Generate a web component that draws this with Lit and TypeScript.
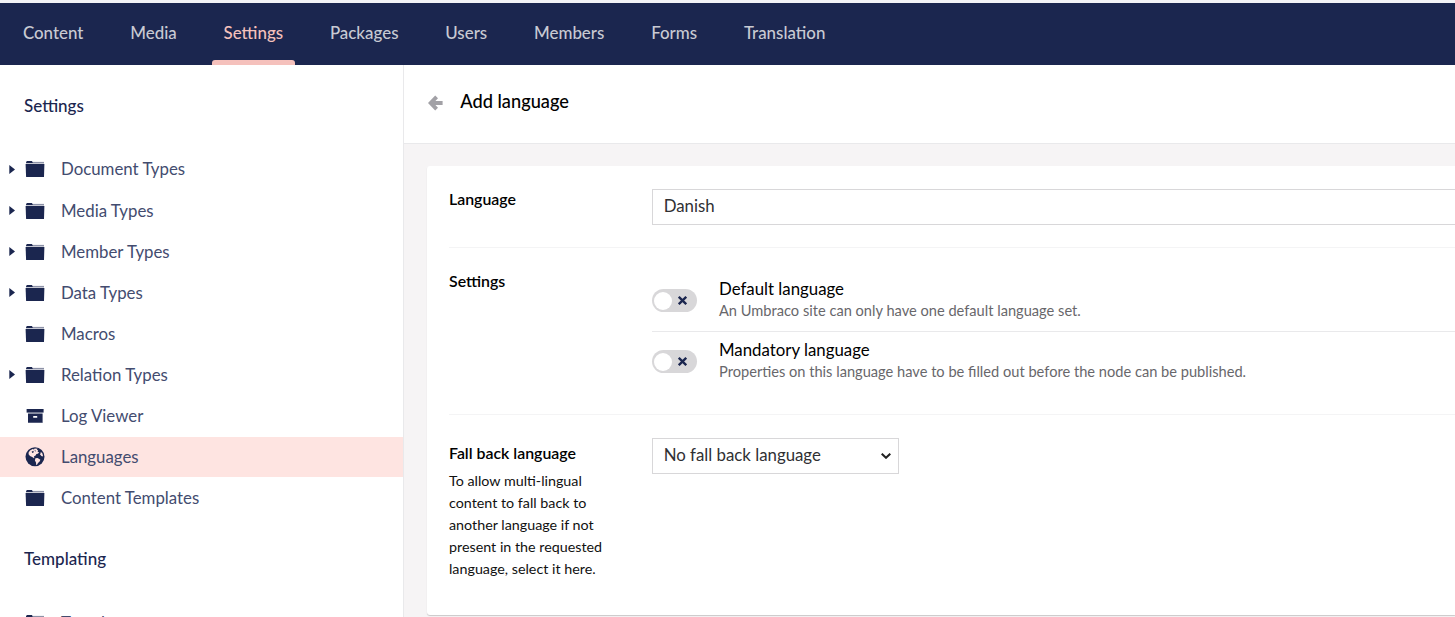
import { LitElement, html, svg, css, nothing } from "lit";
import { customElement } from "lit/decorators.js";
import { classMap } from "lit/directives/class-map.js";

type IconName = "folder" | "box" | "globe";
interface TreeItem {
  label: string;
  icon: IconName;
  expandable?: boolean;
  active?: boolean;
}

const sections = ["Content", "Media", "Settings", "Packages", "Users", "Members", "Forms", "Translation"];

const settingsTree: TreeItem[] = [
  { label: "Document Types", icon: "folder", expandable: true },
  { label: "Media Types", icon: "folder", expandable: true },
  { label: "Member Types", icon: "folder", expandable: true },
  { label: "Data Types", icon: "folder", expandable: true },
  { label: "Macros", icon: "folder" },
  { label: "Relation Types", icon: "folder", expandable: true },
  { label: "Log Viewer", icon: "box" },
  { label: "Languages", icon: "globe", active: true },
  { label: "Content Templates", icon: "folder" },
];
const templatingTree: TreeItem[] = [{ label: "Templates", icon: "folder" }];

const toggles = [
  { title: "Default language", text: "An Umbraco site can only have one default language set." },
  {
    title: "Mandatory language",
    text: "Properties on this language have to be filled out before the node can be published.",
  },
];

const glyphs = {
  folder: svg`
    <path d="M1 4.2V3.3L1.9 2H6.9L7.7 3.3V4.2Z"/>
    <path opacity=".5" d="M7.7 2.9H19V4.5H7.7Z"/>
    <path d="M.6 5.1H19.4L19 18H1.1Z"/>`,
  box: svg`
    <path d="M1.6 3H18.6V6.6H1.6Z"/>
    <path d="M3 7.6H17.6V16.4H3ZM8.2 10V11.8H12.2V10Z" fill-rule="evenodd"/>
    <path opacity=".5" d="M3 16H17.6V17H3Z"/>`,
  globe: svg`
    <circle cx="10" cy="9.7" r="9.5"/>
    <path class="land" d="M5 3.4 7.6 2 9 2.5 9.6 1.6 12.6 1.7 11.8 3 13.2 3.2 12.6 4.7 14.2 5.6 12.8 6.7 11.4 7.1 10.6 8.6 9.2 9.3 8.8 10.3 9.6 10.8 8.9 11.2 7.2 10 5 9 3.6 7.2 3.6 5.5Z"/>
    <path class="land" d="M10.4 11.2 12.6 11 15.4 12.8 14.6 14.6 13 16 12 17.8 11.2 18 11 15.4 9.9 13.4Z"/>
    <path class="land" d="M15.7 5.2 17.1 5.8 18 8.4 17.6 9.4 16.3 8.9 15.2 7.4Z"/>
    <path d="M6.6 4.8 8.4 3.8 8.8 5.2 7.4 6ZM9.4 3.3 10.8 3.5 10.4 4.8Z"/>`,
};

@customElement("app-root")
export class AppRoot extends LitElement {
  static styles = css`
    :host {
      display: flex;
      flex-direction: column;
      box-sizing: border-box;
      width: 100%;
      height: 617px;
      overflow: hidden;
      background: #fff;
      color: #000;
      font: 400 16.82px/22px Lato, "Open Sans", sans-serif;
    }
    * { box-sizing: border-box; }
    .topbar {
      display: flex;
      flex: none;
      gap: 22.85px;
      height: 65px;
      padding-left: 10.9px;
      border-top: 3px solid #f3f3f7;
      background: #1b264f;
      color: #c8cad3;
      font-size: 16.9px;
      font-weight: 500;
    }
    .tab {
      display: flex;
      flex-direction: column;
      justify-content: space-between;
      padding-top: 19px;
    }
    .tab span { padding: 0 12px; }
    .tab.active { color: #f5c1bc; }
    .tab.active::after {
      content: "";
      height: 5px;
      border-radius: 3px 3px 0 0;
      background: #f5c1bc;
    }
    .body { display: flex; flex: 1; min-height: 0; }
    .side {
      flex: none;
      width: 404px;
      overflow: hidden;
      border-right: 1px solid #e9e9eb;
      color: #1b264f;
    }
    .side h2 {
      margin: 30px 0 32.47px 24px;
      font-size: 17px;
      font-weight: 500;
      line-height: 22px;
    }
    .side h2.second { margin: 29.5px 0 33.7px 24px; }
    .node {
      display: flex;
      align-items: center;
      height: 40px;
      margin-bottom: 1.1px;
      padding-left: 9px;
      color: #434c6f;
    }
    .node.active { background: #fee4e1; }
    .node .name { margin-left: 16px; }
    .caret { width: 6px; height: 9px; margin-right: 10px; fill: #1b264f; }
    .icon { width: 20px; height: 20px; fill: #1b264f; }
    .land { fill: #fee4e1; }
    .main { display: flex; flex: 1; flex-direction: column; min-width: 0; background: #f6f4f5; }
    .head {
      display: flex;
      flex: none;
      align-items: center;
      gap: 17.3px;
      height: 79px;
      padding: 0 0 7px 24px;
      border-bottom: 1px solid #e9e9eb;
      background: #fff;
      font-size: 18.2px;
      font-weight: 500;
    }
    .back { width: 15px; height: 16px; margin-top: 4px; fill: #a2a1a6; }
    .card {
      flex: none;
      height: 449px;
      margin: 22px 0 0 23px;
      padding-left: 22px;
      border-radius: 3px 0 0 3px;
      background: #fff;
      box-shadow: 0 1px 1px rgba(0, 0, 0, .18);
    }
    .row { display: flex; padding: 23px 0 22px; border-bottom: 1px solid #f4f4f5; }
    .row:last-child { border: 0; }
    .label { width: 203px; flex: none; margin-top: -1px; font-size: 15.9px; font-weight: 600; }
    .label.drop { padding-top: 5px; }
    .hint { width: 170px; margin-top: 6px; font-size: 14.3px; font-weight: 400; color: #111; }
    .field {
      flex: 1;
      height: 36px;
      padding: 5px 10.7px;
      border: 1px solid #d8d7d9;
      border-right: 0;
      color: #303033;
    }
    .select {
      display: flex;
      align-items: center;
      justify-content: space-between;
      width: 247px;
      height: 36px;
      padding: 0 7px 2px 10.7px;
      border: 1px solid #d8d7d9;
      color: #303033;
    }
    .chevron { width: 10px; height: 6px; margin-top: 2px; fill: none; stroke: #222; stroke-width: 2; }
    .toggles { flex: 1; padding-bottom: 1px; }
    .toggle { display: flex; align-items: center; gap: 22px; height: 60px; padding-bottom: 1px; }
    .toggle + .toggle { border-top: 1px solid #e9e9eb; padding-bottom: 0; }
    .switch {
      display: flex;
      align-items: center;
      justify-content: space-between;
      width: 45px;
      height: 23px;
      padding: 0 10px 0 2px;
      border-radius: 12px;
      background: #d8d7d9;
    }
    .knob { width: 18px; height: 18px; border-radius: 50%; background: #fff; }
    .cross { width: 9px; height: 9px; fill: none; stroke: #1b264f; stroke-width: 2.3; }
    .copy { margin-top: -2px; }
    .desc { font-size: 14.63px; color: #68676b; }
  `;

  private node(item: TreeItem) {
    return html`<div class=${classMap({ node: true, active: !!item.active })}>
      <svg class="caret" viewBox="0 0 6 9">${item.expandable ? svg`<path d="M.3 0 6 4.5.3 9Z"/>` : nothing}</svg>
      <svg class="icon" viewBox="0 0 20 20">${glyphs[item.icon]}</svg>
      <span class="name">${item.label}</span>
    </div>`;
  }

  render() {
    return html`
      <nav class="topbar">
        ${sections.map((s) => html`<div class=${classMap({ tab: true, active: s === "Settings" })}><span>${s}</span></div>`)}
      </nav>
      <div class="body">
        <aside class="side">
          <h2>Settings</h2>
          ${settingsTree.map((i) => this.node(i))}
          <h2 class="second">Templating</h2>
          ${templatingTree.map((i) => this.node(i))}
        </aside>
        <main class="main">
          <header class="head">
            <svg class="back" viewBox="0 0 15 16"><path d="M0 8 7.2.6 10 3.3 7.4 5.9H14.6V10.1H7.4L10 12.7 7.2 15.4Z"/></svg>
            <span>Add language</span>
          </header>
          <section class="card">
            <div class="row">
              <div class="label">Language</div>
              <div class="field">Danish</div>
            </div>
            <div class="row">
              <div class="label">Settings</div>
              <div class="toggles">
                ${toggles.map(
                  (t) => html`<div class="toggle">
                    <div class="switch">
                      <span class="knob"></span>
                      <svg class="cross" viewBox="0 0 9 9"><path d="M.8.8 8.2 8.2M8.2.8.8 8.2"/></svg>
                    </div>
                    <div class="copy">
                      <div>${t.title}</div>
                      <div class="desc">${t.text}</div>
                    </div>
                  </div>`,
                )}
              </div>
            </div>
            <div class="row">
              <div class="label drop">
                Fall back language
                <div class="hint">To allow multi-lingual content to fall back to another language if not present in the requested language, select it here.</div>
              </div>
              <div class="select">
                <span>No fall back language</span>
                <svg class="chevron" viewBox="0 0 10 6"><path d="M.7.7 5 4.8 9.3.7"/></svg>
              </div>
            </div>
          </section>
        </main>
      </div>
    `;
  }
}
